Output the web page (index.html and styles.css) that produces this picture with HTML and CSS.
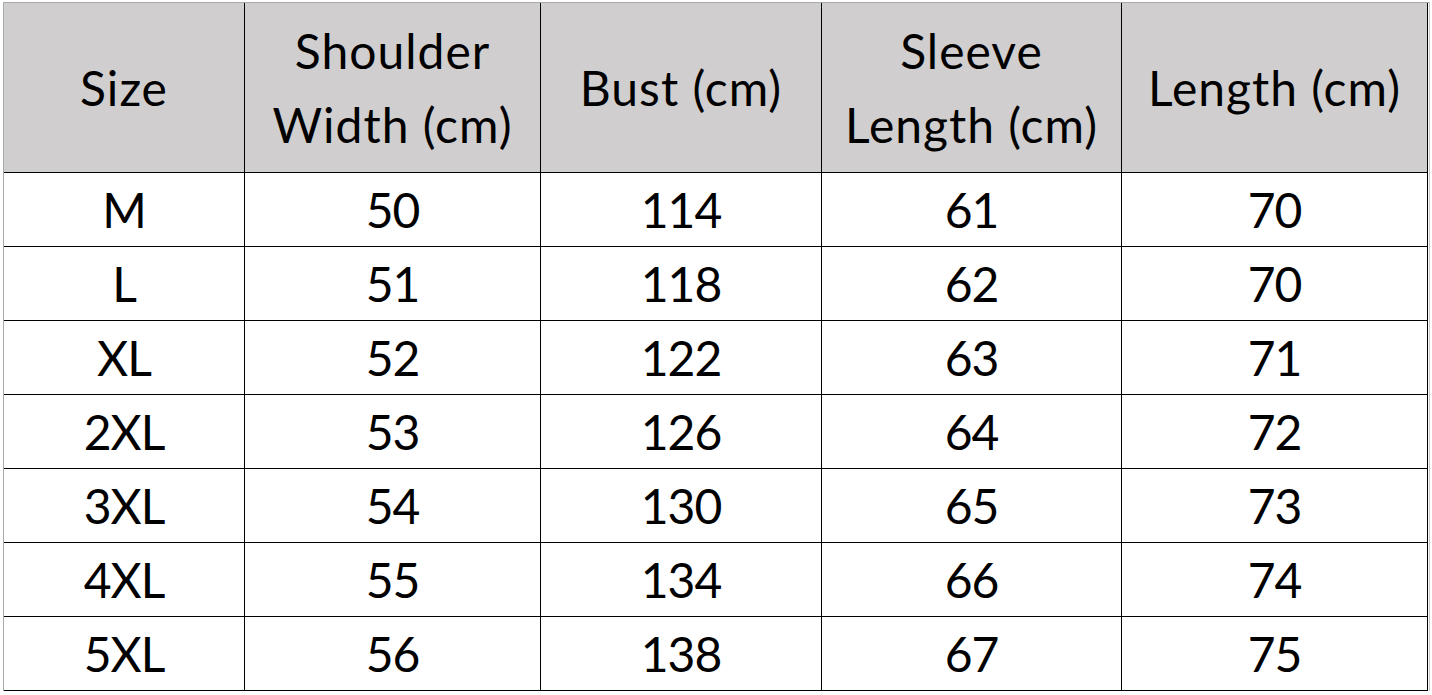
FILE: index.html
```html
<!DOCTYPE html>
<html>
<head>
<meta charset="utf-8">
<link rel="stylesheet" href="styles.css">
</head>
<body>
<div class="sheet">
  <div class="grid">
    <div class="cell head">Size</div>
    <div class="cell head">Shoulder<br>Width (cm)</div>
    <div class="cell head">Bust (cm)</div>
    <div class="cell head">Sleeve<br>Length (cm)</div>
    <div class="cell head">Length (cm)</div>

    <div class="cell">M</div><div class="cell">50</div><div class="cell">114</div><div class="cell">61</div><div class="cell">70</div>
    <div class="cell">L</div><div class="cell">51</div><div class="cell">118</div><div class="cell">62</div><div class="cell">70</div>
    <div class="cell">XL</div><div class="cell">52</div><div class="cell">122</div><div class="cell">63</div><div class="cell">71</div>
    <div class="cell">2XL</div><div class="cell">53</div><div class="cell">126</div><div class="cell">64</div><div class="cell">72</div>
    <div class="cell">3XL</div><div class="cell">54</div><div class="cell">130</div><div class="cell">65</div><div class="cell">73</div>
    <div class="cell">4XL</div><div class="cell">55</div><div class="cell">134</div><div class="cell">66</div><div class="cell">74</div>
    <div class="cell">5XL</div><div class="cell">56</div><div class="cell">138</div><div class="cell">67</div><div class="cell">75</div>
  </div>
</div>
</body>
</html>
```
FILE: styles.css
```css
html, body {
  margin: 0;
  padding: 0;
  background: #ffffff;
}
.sheet {
  margin: 2px 0 0 3px;
  width: 1427px;
  box-sizing: border-box;
  border-top: 1px solid #a9a9a9;
  border-left: 1px solid #a9a9a9;
  border-right: 1px solid #c8c8c8;
  padding-right: 2px;
}
.grid {
  display: grid;
  grid-template-columns: 241px 296px 281px 300px 306px;
  grid-template-rows: 170px repeat(7, 74px);
}
.cell {
  box-sizing: border-box;
  border-right: 1px solid #000;
  border-bottom: 1px solid #000;
  display: flex;
  align-items: center;
  justify-content: center;
  text-align: center;
  font-family: "Lato", "Open Sans", sans-serif;
  font-size: 48px;
  line-height: 74px;
  color: #000;
  letter-spacing: -1px;
}
.head {
  background: #d0cecf;
  letter-spacing: 1px;
}
```
